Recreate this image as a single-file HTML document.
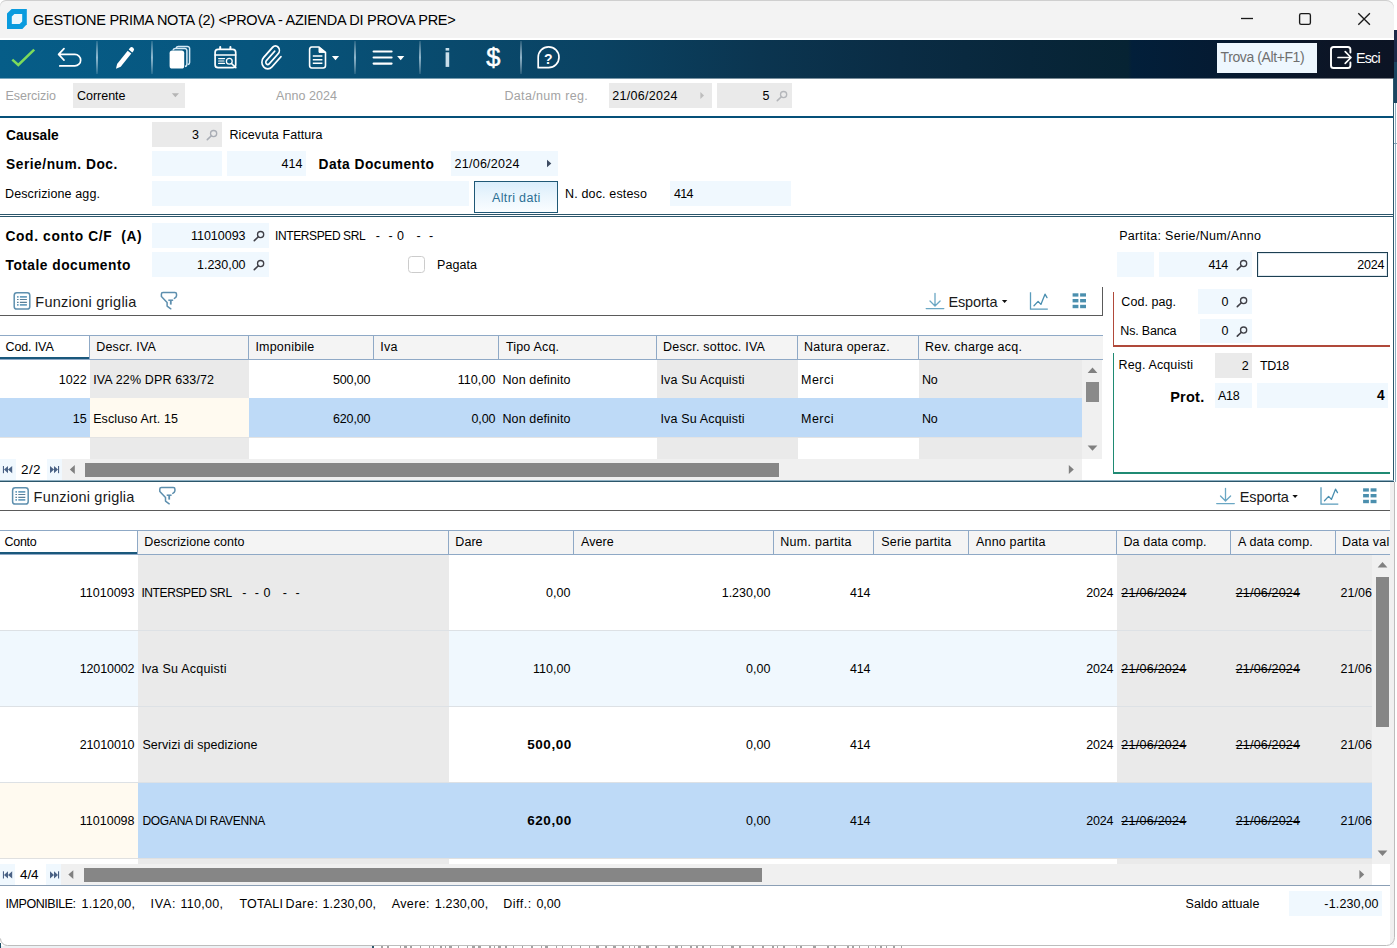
<!DOCTYPE html>
<html><head><meta charset="utf-8"><title>Gestione Prima Nota</title>
<style>
html,body{margin:0;padding:0;background:#fff;}
body{width:1397px;height:948px;overflow:hidden;font-family:"Liberation Sans",sans-serif;}
#w{position:relative;width:1397px;height:948px;overflow:hidden;background:#fff;font-family:"Liberation Sans",sans-serif;font-size:12.5px;line-height:20px;color:#000;}
#w i{position:absolute;display:block;font-style:normal;}
#w b{position:absolute;display:block;font-weight:400;white-space:pre;height:20px;line-height:20px;}
#w svg{position:absolute;display:block;overflow:visible;}

</style></head>
<body>
<div id="w">
<i style="left:1394px;top:0px;width:3px;height:30px;background:#fff;"></i>
<i style="left:1394px;top:30px;width:3px;height:32px;background:#1b2a49;"></i>
<i style="left:1394px;top:62px;width:3px;height:41px;background:#1b4561;"></i>
<i style="left:1395px;top:103px;width:1px;height:379px;background:#8fb0c2;"></i>
<i style="left:1394px;top:143px;width:3px;height:1px;background:#7f9fb4;"></i>
<i style="left:0px;top:0px;width:1394px;height:38px;background:#f3f3f3;border-radius:6px 8px 0 0;box-shadow:inset 0 1px 0 #cfcfcf;"></i>
<i style="left:0px;top:40px;width:1394px;height:38px;background:linear-gradient(90deg,#065d88 0px,#07557d 250px,#094a6d 450px,#0a4262 600px,#0b3550 760px,#0a2c44 900px,#08263a 1030px,#062333 1128px,#021f3a 1132px,#051a31 1230px,#0c1526 1330px,#0c1424 1394px);"></i>
<i style="left:0px;top:78px;width:1394px;height:1px;background:linear-gradient(90deg,#065d88 0px,#07557d 250px,#094a6d 450px,#0a4262 600px,#0b3550 760px,#0a2c44 900px,#08263a 1030px,#062333 1128px,#021f3a 1132px,#051a31 1230px,#0c1526 1330px,#0c1424 1394px);opacity:.55;"></i>
<i style="left:1217px;top:43px;width:100px;height:30px;background:#eef7fe;"></i>
<i style="left:73px;top:83px;width:112px;height:25px;background:#eaeaea;"></i>
<i style="left:609px;top:83px;width:103px;height:25px;background:#eaeaea;"></i>
<i style="left:717px;top:83px;width:75px;height:25px;background:#eaeaea;"></i>
<i style="left:0px;top:116px;width:1394px;height:2px;background:#055079;"></i>
<i style="left:1393px;top:78px;width:1px;height:404px;background:#2b566b;"></i>
<i style="left:152px;top:122px;width:70px;height:25px;background:#eaeaea;"></i>
<i style="left:152px;top:151px;width:70px;height:25px;background:#f0f8fe;"></i>
<i style="left:227px;top:151px;width:79px;height:25px;background:#f0f8fe;"></i>
<i style="left:451px;top:151px;width:107px;height:25px;background:#f0f8fe;"></i>
<i style="left:152px;top:181px;width:317px;height:25px;background:#f0f8fe;"></i>
<i style="left:670px;top:181px;width:121px;height:25px;background:#f0f8fe;"></i>
<i style="left:474px;top:181px;width:84px;height:32px;background:linear-gradient(#d9edfb,#eaf5fd 45%,#fafdff);box-sizing:border-box;border:1px solid #1f5876;"></i>
<i style="left:0px;top:214px;width:1394px;height:1px;background:#2b566b;"></i>
<i style="left:0px;top:216px;width:1394px;height:1px;background:#2b566b;"></i>
<i style="left:152px;top:223px;width:117px;height:25px;background:#f0f8fe;"></i>
<i style="left:152px;top:252px;width:117px;height:25px;background:#f0f8fe;"></i>
<i style="left:408px;top:256px;width:17px;height:17px;background:#fff;box-sizing:border-box;border:1.5px solid #cccccc;border-radius:3.5px;"></i>
<i style="left:1117px;top:252px;width:37px;height:25px;background:#f0f8fe;"></i>
<i style="left:1159px;top:252px;width:93px;height:25px;background:#f0f8fe;"></i>
<i style="left:1257px;top:252px;width:131px;height:25px;background:#fff;box-sizing:border-box;border:1px solid #1d3f52;box-shadow:inset 0 0 0 1px #dfe8ee;"></i>
<i style="left:1198px;top:289px;width:54px;height:25px;background:#f0f8fe;"></i>
<i style="left:1200px;top:319px;width:52px;height:24px;background:#f0f8fe;"></i>
<i style="left:1112.5px;top:292px;width:1.8px;height:55px;background:#b0493a;"></i>
<i style="left:1112.5px;top:345px;width:277.5px;height:1.8px;background:#b0493a;"></i>
<i style="left:1215px;top:353px;width:37px;height:25px;background:#eaeaea;"></i>
<i style="left:1215px;top:383px;width:37px;height:25px;background:#f0f8fe;"></i>
<i style="left:1257px;top:383px;width:131px;height:25px;background:#f0f8fe;"></i>
<i style="left:1112.5px;top:353px;width:1.8px;height:121px;background:#1f8a73;"></i>
<i style="left:1112.5px;top:472.2px;width:277.5px;height:1.8px;background:#1f8a73;"></i>
<i style="left:0px;top:315px;width:1103px;height:1px;background:#5a5a5a;"></i>
<i style="left:1102px;top:287px;width:1px;height:29px;background:#5a5a5a;"></i>
<i style="left:0px;top:335px;width:1103px;height:25px;background:#f4f4f4;box-sizing:border-box;border-top:1px solid #8fa9c6;border-bottom:1px solid #8fa9c6;"></i>
<i style="left:0px;top:336px;width:89px;height:22px;background:#fff;"></i>
<i style="left:0px;top:357px;width:89px;height:2px;background:#1a587c;"></i>
<i style="left:89px;top:335px;width:1px;height:25px;background:#8fa9c6;"></i>
<i style="left:248px;top:335px;width:1px;height:25px;background:#8fa9c6;"></i>
<i style="left:373px;top:335px;width:1px;height:25px;background:#8fa9c6;"></i>
<i style="left:498px;top:335px;width:1px;height:25px;background:#8fa9c6;"></i>
<i style="left:656px;top:335px;width:1px;height:25px;background:#8fa9c6;"></i>
<i style="left:797px;top:335px;width:1px;height:25px;background:#8fa9c6;"></i>
<i style="left:918px;top:335px;width:1px;height:25px;background:#8fa9c6;"></i>
<i style="left:0px;top:360px;width:1082px;height:38px;background:#fff;"></i>
<i style="left:90px;top:360px;width:159px;height:38px;background:#eaeaea;"></i>
<i style="left:657px;top:360px;width:141px;height:38px;background:#eaeaea;"></i>
<i style="left:919px;top:360px;width:163px;height:38px;background:#eaeaea;"></i>
<i style="left:0px;top:398px;width:1082px;height:39px;background:#bedaf7;"></i>
<i style="left:90px;top:398px;width:159px;height:39px;background:#fffaf0;"></i>
<i style="left:0px;top:437px;width:1082px;height:1px;background:#e3e3e3;"></i>
<i style="left:90px;top:438px;width:159px;height:21px;background:#eaeaea;"></i>
<i style="left:657px;top:438px;width:141px;height:21px;background:#eaeaea;"></i>
<i style="left:919px;top:438px;width:163px;height:21px;background:#eaeaea;"></i>
<i style="left:1082px;top:360px;width:20px;height:99px;background:#f0f0f0;"></i>
<i style="left:1086px;top:382px;width:13px;height:20px;background:#8a8a8a;"></i>
<i style="left:0px;top:459px;width:1082px;height:21px;background:#f0f0f0;"></i>
<i style="left:0px;top:459px;width:16px;height:21px;background:#f0f8fe;"></i>
<i style="left:16px;top:459px;width:31px;height:21px;background:#fff;"></i>
<i style="left:47px;top:459px;width:15px;height:21px;background:#f0f8fe;"></i>
<i style="left:85px;top:463px;width:694px;height:14px;background:#868686;"></i>
<i style="left:0px;top:480px;width:1394px;height:1px;background:#8fb0c2;"></i>
<i style="left:0px;top:481px;width:1394px;height:1px;background:#2b566b;"></i>
<i style="left:1390px;top:482px;width:4px;height:463px;background:#f0f0f0;"></i>
<i style="left:0px;top:510px;width:1390px;height:1px;background:#5a5a5a;"></i>
<i style="left:0px;top:530px;width:1390px;height:25px;background:#f4f4f4;box-sizing:border-box;border-top:1px solid #8fa9c6;border-bottom:1px solid #8fa9c6;"></i>
<i style="left:0px;top:531px;width:137px;height:22px;background:#fff;"></i>
<i style="left:0px;top:552px;width:137px;height:2px;background:#1a587c;"></i>
<i style="left:137px;top:530px;width:1px;height:25px;background:#8fa9c6;"></i>
<i style="left:448px;top:530px;width:1px;height:25px;background:#8fa9c6;"></i>
<i style="left:573px;top:530px;width:1px;height:25px;background:#8fa9c6;"></i>
<i style="left:773px;top:530px;width:1px;height:25px;background:#8fa9c6;"></i>
<i style="left:873px;top:530px;width:1px;height:25px;background:#8fa9c6;"></i>
<i style="left:968px;top:530px;width:1px;height:25px;background:#8fa9c6;"></i>
<i style="left:1116px;top:530px;width:1px;height:25px;background:#8fa9c6;"></i>
<i style="left:1230px;top:530px;width:1px;height:25px;background:#8fa9c6;"></i>
<i style="left:1335px;top:530px;width:1px;height:25px;background:#8fa9c6;"></i>
<i style="left:0px;top:631px;width:1372px;height:76px;background:#f0f8fe;"></i>
<i style="left:138px;top:555px;width:311px;height:228px;background:#eaeaea;"></i>
<i style="left:1117px;top:555px;width:255px;height:228px;background:#eaeaea;"></i>
<i style="left:0px;top:630px;width:1372px;height:1px;background:#dde1e5;"></i>
<i style="left:0px;top:706px;width:1372px;height:1px;background:#dde1e5;"></i>
<i style="left:0px;top:782px;width:1372px;height:1px;background:#dde1e5;"></i>
<i style="left:0px;top:783px;width:138px;height:76px;background:#fffaf0;"></i>
<i style="left:138px;top:783px;width:1234px;height:76px;background:#bedaf7;"></i>
<i style="left:0px;top:858px;width:1372px;height:1px;background:#e0e0e0;"></i>
<i style="left:138px;top:859px;width:311px;height:5px;background:#eaeaea;"></i>
<i style="left:1117px;top:859px;width:255px;height:5px;background:#eaeaea;"></i>
<i style="left:1372px;top:555px;width:18px;height:309px;background:#f0f0f0;"></i>
<i style="left:1376px;top:577px;width:13px;height:150px;background:#868686;"></i>
<i style="left:0px;top:864px;width:1372px;height:21px;background:#f0f0f0;"></i>
<i style="left:0px;top:864px;width:15px;height:21px;background:#f0f8fe;"></i>
<i style="left:15px;top:864px;width:31px;height:21px;background:#fff;"></i>
<i style="left:46px;top:864px;width:15px;height:21px;background:#f0f8fe;"></i>
<i style="left:84px;top:868px;width:678px;height:14px;background:#868686;"></i>
<i style="left:0px;top:885px;width:1390px;height:1px;background:#8b9fb5;"></i>
<i style="left:1289px;top:891px;width:93px;height:25px;background:#f0f8fe;"></i>
<i style="left:0px;top:946px;width:372px;height:2px;background:#edf1f4;"></i>
<i style="left:372px;top:945px;width:2px;height:3px;background:#2b566b;"></i>
<i style="left:0px;top:943px;width:1px;height:5px;background:#1d4f66;"></i>
<i style="left:381px;top:946px;width:2px;height:2px;background:#555;opacity:.55;"></i>
<i style="left:387px;top:946px;width:2px;height:2px;background:#555;opacity:.55;"></i>
<i style="left:400px;top:946px;width:1px;height:2px;background:#555;opacity:.55;"></i>
<i style="left:404px;top:946px;width:3px;height:2px;background:#555;opacity:.55;"></i>
<i style="left:410px;top:946px;width:2px;height:2px;background:#555;opacity:.55;"></i>
<i style="left:420px;top:946px;width:1px;height:2px;background:#555;opacity:.55;"></i>
<i style="left:429px;top:946px;width:1px;height:2px;background:#555;opacity:.55;"></i>
<i style="left:433px;top:946px;width:1px;height:2px;background:#555;opacity:.55;"></i>
<i style="left:440px;top:946px;width:2px;height:2px;background:#555;opacity:.55;"></i>
<i style="left:445px;top:946px;width:1px;height:2px;background:#555;opacity:.55;"></i>
<i style="left:449px;top:946px;width:3px;height:2px;background:#555;opacity:.55;"></i>
<i style="left:458px;top:946px;width:1px;height:2px;background:#555;opacity:.55;"></i>
<i style="left:467px;top:946px;width:1px;height:2px;background:#555;opacity:.55;"></i>
<i style="left:472px;top:946px;width:3px;height:2px;background:#555;opacity:.55;"></i>
<i style="left:478px;top:946px;width:3px;height:2px;background:#555;opacity:.55;"></i>
<i style="left:489px;top:946px;width:2px;height:2px;background:#555;opacity:.55;"></i>
<i style="left:494px;top:946px;width:1px;height:2px;background:#555;opacity:.55;"></i>
<i style="left:498px;top:946px;width:3px;height:2px;background:#555;opacity:.55;"></i>
<i style="left:505px;top:946px;width:2px;height:2px;background:#555;opacity:.55;"></i>
<i style="left:513px;top:946px;width:1px;height:2px;background:#555;opacity:.55;"></i>
<i style="left:522px;top:946px;width:1px;height:2px;background:#555;opacity:.55;"></i>
<i style="left:531px;top:946px;width:2px;height:2px;background:#555;opacity:.55;"></i>
<i style="left:541px;top:946px;width:1px;height:2px;background:#555;opacity:.55;"></i>
<i style="left:545px;top:946px;width:3px;height:2px;background:#555;opacity:.55;"></i>
<i style="left:556px;top:946px;width:1px;height:2px;background:#555;opacity:.55;"></i>
<i style="left:562px;top:946px;width:1px;height:2px;background:#555;opacity:.55;"></i>
<i style="left:571px;top:946px;width:1px;height:2px;background:#555;opacity:.55;"></i>
<i style="left:580px;top:946px;width:1px;height:2px;background:#555;opacity:.55;"></i>
<i style="left:589px;top:946px;width:1px;height:2px;background:#555;opacity:.55;"></i>
<i style="left:596px;top:946px;width:3px;height:2px;background:#555;opacity:.55;"></i>
<i style="left:605px;top:946px;width:2px;height:2px;background:#555;opacity:.55;"></i>
<i style="left:613px;top:946px;width:3px;height:2px;background:#555;opacity:.55;"></i>
<i style="left:622px;top:946px;width:2px;height:2px;background:#555;opacity:.55;"></i>
<i style="left:629px;top:946px;width:1px;height:2px;background:#555;opacity:.55;"></i>
<i style="left:634px;top:946px;width:1px;height:2px;background:#555;opacity:.55;"></i>
<i style="left:638px;top:946px;width:3px;height:2px;background:#555;opacity:.55;"></i>
<i style="left:646px;top:946px;width:3px;height:2px;background:#555;opacity:.55;"></i>
<i style="left:655px;top:946px;width:2px;height:2px;background:#555;opacity:.55;"></i>
<i style="left:668px;top:946px;width:2px;height:2px;background:#555;opacity:.55;"></i>
<i style="left:675px;top:946px;width:3px;height:2px;background:#555;opacity:.55;"></i>
<i style="left:681px;top:946px;width:1px;height:2px;background:#555;opacity:.55;"></i>
<i style="left:690px;top:946px;width:2px;height:2px;background:#555;opacity:.55;"></i>
<i style="left:696px;top:946px;width:2px;height:2px;background:#555;opacity:.55;"></i>
<i style="left:702px;top:946px;width:2px;height:2px;background:#555;opacity:.55;"></i>
<i style="left:710px;top:946px;width:1px;height:2px;background:#555;opacity:.55;"></i>
<i style="left:722px;top:946px;width:1px;height:2px;background:#555;opacity:.55;"></i>
<i style="left:731px;top:946px;width:3px;height:2px;background:#555;opacity:.55;"></i>
<i style="left:739px;top:946px;width:2px;height:2px;background:#555;opacity:.55;"></i>
<i style="left:752px;top:946px;width:2px;height:2px;background:#555;opacity:.55;"></i>
<i style="left:762px;top:946px;width:2px;height:2px;background:#555;opacity:.55;"></i>
<i style="left:772px;top:946px;width:2px;height:2px;background:#555;opacity:.55;"></i>
<i style="left:777px;top:946px;width:1px;height:2px;background:#555;opacity:.55;"></i>
<i style="left:783px;top:946px;width:2px;height:2px;background:#555;opacity:.55;"></i>
<i style="left:796px;top:946px;width:1px;height:2px;background:#555;opacity:.55;"></i>
<i style="left:800px;top:946px;width:2px;height:2px;background:#555;opacity:.55;"></i>
<i style="left:813px;top:946px;width:3px;height:2px;background:#555;opacity:.55;"></i>
<i style="left:827px;top:946px;width:2px;height:2px;background:#555;opacity:.55;"></i>
<i style="left:834px;top:946px;width:2px;height:2px;background:#555;opacity:.55;"></i>
<i style="left:847px;top:946px;width:2px;height:2px;background:#555;opacity:.55;"></i>
<i style="left:852px;top:946px;width:2px;height:2px;background:#555;opacity:.55;"></i>
<i style="left:859px;top:946px;width:1px;height:2px;background:#555;opacity:.55;"></i>
<i style="left:868px;top:946px;width:1px;height:2px;background:#555;opacity:.55;"></i>
<i style="left:875px;top:946px;width:1px;height:2px;background:#555;opacity:.55;"></i>
<i style="left:880px;top:946px;width:2px;height:2px;background:#555;opacity:.55;"></i>
<i style="left:886px;top:946px;width:1px;height:2px;background:#555;opacity:.55;"></i>
<i style="left:893px;top:946px;width:2px;height:2px;background:#555;opacity:.55;"></i>
<i style="left:901px;top:946px;width:1px;height:2px;background:#555;opacity:.55;"></i>
<svg style="left:0;top:0" width="1397" height="948" viewBox="0 0 1397 948"><path d="M0.5 938.5 A7 7 0 0 0 7.5 945.5 H1386.5 A8 8 0 0 0 1394.5 937.5 V482" stroke="#bdbdbd" stroke-width="1" fill="none"/></svg>
<b style="left:33.00px;top:10px;font-size:14.5px;letter-spacing:-0.280px;">GESTIONE PRIMA NOTA (2) &lt;PROVA - AZIENDA DI PROVA PRE&gt;</b>
<b style="left:1220.60px;top:47px;font-size:14px;color:#6f6f6f;letter-spacing:-0.405px;">Trova (Alt+F1)</b>
<b style="left:1356.00px;top:48px;font-size:14.25px;color:#fff;letter-spacing:-0.785px;">Esci</b>
<b style="left:5.50px;top:86px;color:#a3a3a3;letter-spacing:-0.032px;">Esercizio</b>
<b style="left:77.00px;top:86px;letter-spacing:-0.026px;">Corrente</b>
<b style="left:276.00px;top:86px;color:#a3a3a3;letter-spacing:0.060px;">Anno 2024</b>
<b style="left:504.40px;top:86px;color:#a3a3a3;letter-spacing:0.347px;">Data/num reg.</b>
<b style="left:612.20px;top:86px;letter-spacing:0.299px;">21/06/2024</b>
<b style="left:762.50px;top:86px;">5</b>
<b style="left:6.00px;top:126px;font-size:13.75px;font-weight:700;letter-spacing:-0.015px;">Causale</b>
<b style="left:192.00px;top:125px;">3</b>
<b style="left:229.50px;top:125px;letter-spacing:0.090px;">Ricevuta Fattura</b>
<b style="left:6.00px;top:155px;font-size:13.75px;font-weight:700;letter-spacing:0.529px;">Serie/num. Doc.</b>
<b style="left:281.60px;top:154px;">414</b>
<b style="left:318.50px;top:155px;font-size:13.75px;font-weight:700;letter-spacing:0.473px;">Data Documento</b>
<b style="left:454.50px;top:154px;letter-spacing:0.266px;">21/06/2024</b>
<b style="left:5.00px;top:184px;letter-spacing:0.125px;">Descrizione agg.</b>
<b style="left:492.00px;top:188px;color:#2a6f94;letter-spacing:0.347px;">Altri dati</b>
<b style="left:565.00px;top:184px;letter-spacing:0.158px;">N. doc. esteso</b>
<b style="left:674.00px;top:184px;letter-spacing:-0.702px;">414</b>
<b style="left:5.50px;top:227px;font-size:13.75px;font-weight:700;letter-spacing:0.644px;">Cod. conto C/F  (A)</b>
<b style="left:191.00px;top:226px;letter-spacing:-0.019px;">11010093</b>
<b style="left:275.00px;top:226px;font-size:12px;letter-spacing:-0.390px;">INTERSPED SRL</b>
<b style="left:375.80px;top:226px;letter-spacing:0.498px;">-  - 0   -  -</b>
<b style="left:5.50px;top:256px;font-size:13.75px;font-weight:700;letter-spacing:0.501px;">Totale documento</b>
<b style="left:197.00px;top:255px;letter-spacing:-0.015px;">1.230,00</b>
<b style="left:437.00px;top:255px;letter-spacing:0.067px;">Pagata</b>
<b style="left:1119.20px;top:226px;letter-spacing:0.317px;">Partita: Serie/Num/Anno</b>
<b style="left:1208.40px;top:255px;letter-spacing:-0.552px;">414</b>
<b style="left:1357.20px;top:255px;letter-spacing:-0.219px;">2024</b>
<b style="left:1121.30px;top:292px;letter-spacing:0.058px;">Cod. pag.</b>
<b style="left:1221.40px;top:292px;">0</b>
<b style="left:1120.30px;top:321px;letter-spacing:-0.189px;">Ns. Banca</b>
<b style="left:1221.40px;top:321px;">0</b>
<b style="left:1118.60px;top:355px;letter-spacing:0.128px;">Reg. Acquisti</b>
<b style="left:1241.80px;top:356px;">2</b>
<b style="left:1260.00px;top:356px;letter-spacing:-0.472px;">TD18</b>
<b style="left:1170.20px;top:387px;font-size:14.5px;font-weight:700;letter-spacing:0.250px;">Prot.</b>
<b style="left:1218.00px;top:386px;letter-spacing:-0.295px;">A18</b>
<b style="left:1377.00px;top:386px;font-size:13.75px;font-weight:700;">4</b>
<b style="left:35.30px;top:292px;font-size:14.5px;color:#1a1a1a;letter-spacing:0.236px;">Funzioni griglia</b>
<b style="left:948.50px;top:292px;font-size:14.5px;color:#1a1a1a;letter-spacing:-0.151px;">Esporta</b>
<b style="left:33.60px;top:487px;font-size:14.5px;color:#1a1a1a;letter-spacing:0.216px;">Funzioni griglia</b>
<b style="left:1239.80px;top:487px;font-size:14.5px;color:#1a1a1a;letter-spacing:-0.151px;">Esporta</b>
<b style="left:5.50px;top:337px;letter-spacing:-0.123px;">Cod. IVA</b>
<b style="left:96.20px;top:337px;letter-spacing:0.180px;">Descr. IVA</b>
<b style="left:255.40px;top:337px;letter-spacing:0.208px;">Imponibile</b>
<b style="left:380.30px;top:337px;letter-spacing:0.289px;">Iva</b>
<b style="left:505.90px;top:337px;letter-spacing:0.192px;">Tipo Acq.</b>
<b style="left:663.00px;top:337px;letter-spacing:0.201px;">Descr. sottoc. IVA</b>
<b style="left:804.00px;top:337px;letter-spacing:0.238px;">Natura operaz.</b>
<b style="left:925.00px;top:337px;letter-spacing:0.220px;">Rev. charge acq.</b>
<b style="left:58.84px;top:370px;">1022</b>
<b style="left:93.20px;top:370px;letter-spacing:0.134px;">IVA 22% DPR 633/72</b>
<b style="left:333.00px;top:370px;letter-spacing:-0.156px;">500,00</b>
<b style="left:457.80px;top:370px;letter-spacing:0.049px;">110,00</b>
<b style="left:502.40px;top:370px;letter-spacing:0.131px;">Non definito</b>
<b style="left:660.50px;top:370px;letter-spacing:0.150px;">Iva Su Acquisti</b>
<b style="left:801.00px;top:370px;letter-spacing:0.481px;">Merci</b>
<b style="left:922.00px;top:370px;letter-spacing:-0.327px;">No</b>
<b style="left:72.75px;top:409px;">15</b>
<b style="left:93.20px;top:409px;letter-spacing:0.099px;">Escluso Art. 15</b>
<b style="left:333.00px;top:409px;letter-spacing:-0.156px;">620,00</b>
<b style="left:471.60px;top:409px;letter-spacing:-0.192px;">0,00</b>
<b style="left:502.40px;top:409px;letter-spacing:0.131px;">Non definito</b>
<b style="left:660.50px;top:409px;letter-spacing:0.150px;">Iva Su Acquisti</b>
<b style="left:801.00px;top:409px;letter-spacing:0.481px;">Merci</b>
<b style="left:922.00px;top:409px;letter-spacing:-0.327px;">No</b>
<b style="left:21.00px;top:460px;font-size:13.5px;letter-spacing:0.371px;">2/2</b>
<b style="left:4.50px;top:532px;letter-spacing:-0.276px;">Conto</b>
<b style="left:144.30px;top:532px;letter-spacing:0.056px;">Descrizione conto</b>
<b style="left:455.30px;top:532px;letter-spacing:0.053px;">Dare</b>
<b style="left:581.00px;top:532px;letter-spacing:0.056px;">Avere</b>
<b style="left:780.20px;top:532px;letter-spacing:0.298px;">Num. partita</b>
<b style="left:881.30px;top:532px;letter-spacing:0.205px;">Serie partita</b>
<b style="left:976.00px;top:532px;letter-spacing:0.186px;">Anno partita</b>
<b style="left:1123.40px;top:532px;letter-spacing:0.148px;">Da data comp.</b>
<b style="left:1238.00px;top:532px;letter-spacing:0.166px;">A data comp.</b>
<b style="left:1342.00px;top:532px;letter-spacing:0.189px;">Data val</b>
<b style="left:79.70px;top:583px;letter-spacing:0.023px;">11010093</b>
<b style="left:141.40px;top:583px;font-size:12px;letter-spacing:-0.390px;">INTERSPED SRL</b>
<b style="left:242.20px;top:583px;letter-spacing:0.506px;">-  - 0   -  -</b>
<b style="left:546.02px;top:583px;">0,00</b>
<b style="left:721.69px;top:583px;">1.230,00</b>
<b style="left:850.00px;top:583px;letter-spacing:-0.252px;">414</b>
<b style="left:1086.30px;top:583px;letter-spacing:-0.219px;">2024</b>
<b style="left:1121.30px;top:583px;letter-spacing:0.266px;text-decoration:line-through;">21/06/2024</b>
<b style="left:1235.70px;top:583px;letter-spacing:0.188px;text-decoration:line-through;">21/06/2024</b>
<b style="left:1340.60px;top:583px;letter-spacing:0.018px;">21/06</b>
<b style="left:79.70px;top:659px;letter-spacing:-0.109px;">12010002</b>
<b style="left:141.40px;top:659px;letter-spacing:0.228px;">Iva Su Acquisti</b>
<b style="left:533.05px;top:659px;">110,00</b>
<b style="left:746.02px;top:659px;">0,00</b>
<b style="left:850.00px;top:659px;letter-spacing:-0.252px;">414</b>
<b style="left:1086.30px;top:659px;letter-spacing:-0.219px;">2024</b>
<b style="left:1121.30px;top:659px;letter-spacing:0.266px;text-decoration:line-through;">21/06/2024</b>
<b style="left:1235.70px;top:659px;letter-spacing:0.188px;text-decoration:line-through;">21/06/2024</b>
<b style="left:1340.60px;top:659px;letter-spacing:0.018px;">21/06</b>
<b style="left:79.70px;top:735px;letter-spacing:-0.109px;">21010010</b>
<b style="left:142.40px;top:735px;letter-spacing:0.055px;">Servizi di spedizione</b>
<b style="left:527.20px;top:735px;font-size:13.5px;font-weight:700;letter-spacing:0.563px;">500,00</b>
<b style="left:746.02px;top:735px;">0,00</b>
<b style="left:850.00px;top:735px;letter-spacing:-0.252px;">414</b>
<b style="left:1086.30px;top:735px;letter-spacing:-0.219px;">2024</b>
<b style="left:1121.30px;top:735px;letter-spacing:0.266px;text-decoration:line-through;">21/06/2024</b>
<b style="left:1235.70px;top:735px;letter-spacing:0.188px;text-decoration:line-through;">21/06/2024</b>
<b style="left:1340.60px;top:735px;letter-spacing:0.018px;">21/06</b>
<b style="left:79.70px;top:811px;letter-spacing:0.023px;">11010098</b>
<b style="left:142.40px;top:811px;font-size:12px;letter-spacing:-0.262px;">DOGANA DI RAVENNA</b>
<b style="left:527.20px;top:811px;font-size:13.5px;font-weight:700;letter-spacing:0.563px;">620,00</b>
<b style="left:746.02px;top:811px;">0,00</b>
<b style="left:850.00px;top:811px;letter-spacing:-0.252px;">414</b>
<b style="left:1086.30px;top:811px;letter-spacing:-0.219px;">2024</b>
<b style="left:1121.30px;top:811px;letter-spacing:0.266px;text-decoration:line-through;">21/06/2024</b>
<b style="left:1235.70px;top:811px;letter-spacing:0.188px;text-decoration:line-through;">21/06/2024</b>
<b style="left:1340.60px;top:811px;letter-spacing:0.018px;">21/06</b>
<b style="left:20.00px;top:865px;font-size:13.5px;letter-spacing:-0.129px;">4/4</b>
<b style="left:5.50px;top:894px;letter-spacing:-0.445px;">IMPONIBILE:</b>
<b style="left:81.60px;top:894px;letter-spacing:0.143px;">1.120,00,</b>
<b style="left:150.50px;top:894px;letter-spacing:0.760px;">IVA:</b>
<b style="left:180.40px;top:894px;letter-spacing:0.299px;">110,00,</b>
<b style="left:239.50px;top:894px;letter-spacing:0.154px;">TOTALI</b>
<b style="left:285.40px;top:894px;letter-spacing:0.477px;">Dare:</b>
<b style="left:322.50px;top:894px;letter-spacing:0.168px;">1.230,00,</b>
<b style="left:391.80px;top:894px;letter-spacing:0.354px;">Avere:</b>
<b style="left:434.80px;top:894px;letter-spacing:0.155px;">1.230,00,</b>
<b style="left:503.30px;top:894px;letter-spacing:0.481px;">Diff.:</b>
<b style="left:536.40px;top:894px;letter-spacing:-0.026px;">0,00</b>
<b style="left:1185.50px;top:894px;letter-spacing:0.073px;">Saldo attuale</b>
<b style="left:1324.30px;top:894px;letter-spacing:0.167px;">-1.230,00</b>
<svg style="left:0;top:0" width="1397" height="948" viewBox="0 0 1397 948"><defs><linearGradient id="sep" x1="0" y1="0" x2="0" y2="1"><stop offset="0" stop-color="#fff" stop-opacity=".12"/><stop offset=".5" stop-color="#cfe8f6" stop-opacity=".75"/><stop offset="1" stop-color="#fff" stop-opacity=".12"/></linearGradient></defs><path d="M7 13.6 L11.6 9 H26.8 V24.2 L22.4 28.9 H7 Z" fill="#0a9bde"/><path d="M11.8 16.6 L14.4 13.9 H22.2 V21.4 L19.6 24 H11.8 Z" fill="#eef7fc"/><path d="M1241 18.5 H1253" stroke="#1a1a1a" stroke-width="1.3" fill="none"/><rect x="1299.6" y="13.6" width="10.8" height="10.8" rx="1.6" stroke="#1a1a1a" stroke-width="1.35" fill="none"/><path d="M1358.3 13.3 L1369.9 24.7 M1369.9 13.3 L1358.3 24.7" stroke="#1a1a1a" stroke-width="1.35" fill="none"/><rect x="96.1" y="41" width="1.8" height="33" fill="url(#sep)"/><rect x="151.1" y="41" width="1.8" height="33" fill="url(#sep)"/><rect x="354.1" y="41" width="1.8" height="33" fill="url(#sep)"/><rect x="419.1" y="41" width="1.8" height="33" fill="url(#sep)"/><rect x="520.1" y="41" width="1.8" height="33" fill="url(#sep)"/><path d="M12.3 59.6 L18.3 65 L34.2 49.6" stroke="#7ddb5b" stroke-width="2.5" fill="none"/><path d="M64 48.7 L58.6 54.4 L64 60.1 M58.8 54.4 H74.9 A5.75 5.75 0 0 1 74.9 65.9 H59.8" stroke="#fff" stroke-width="1.7" fill="none" stroke-linecap="round" stroke-linejoin="round"/><g fill="#fff"><path d="M116 68.8 L117.1 63.9 L127.7 50.7 L131.3 53.6 L120.7 66.8 Z"/><path d="M128.7 49.5 L129.9 48 A2.3 2.3 0 0 1 133.5 50.9 L132.3 52.4 Z"/></g><g><rect x="169.6" y="50.6" width="14.6" height="18" rx="2.6" fill="#fff"/><path d="M173.2 50.2 V50 A2.2 2.2 0 0 1 175.4 48.4 H184.6 A2.2 2.2 0 0 1 186.9 50.6 V64.4 A2.2 2.2 0 0 1 185 66.5" stroke="#d5e9f5" stroke-width="1.5" fill="none"/><path d="M176.2 48 A2.2 2.2 0 0 1 178.4 46.4 H187.4 A2.2 2.2 0 0 1 189.6 48.6 V62.4 A2.2 2.2 0 0 1 187.8 64.5" stroke="#d5e9f5" stroke-width="1.5" fill="none"/></g><g stroke="#fff" fill="none" stroke-linecap="round"><rect x="215.1" y="49.3" width="20.6" height="18.4" rx="3" stroke-width="1.7"/><path d="M215 55 H235.8" stroke-width="1.3"/><path d="M220.2 46.9 V48.8 M230.4 46.9 V48.8" stroke-width="2"/><path d="M218.6 58.6 H224.6 M218.6 61 H224 M218.6 63.4 H224.6" stroke-width="1.1"/><circle cx="229.3" cy="61.2" r="2.9" stroke-width="1.3"/><path d="M231.5 63.5 L235.8 67.6" stroke-width="1.6"/></g><g transform="translate(259.9,44.4) scale(0.985,1.115)"><path d="M21.44 11.05l-9.19 9.19a6 6 0 0 1-8.49-8.49l9.19-9.19a4 4 0 0 1 5.66 5.66l-9.2 9.19a2 2 0 0 1-2.83-2.83l8.49-8.48" stroke="#fff" stroke-width="1.65" fill="none" stroke-linecap="round" stroke-linejoin="round"/></g><g stroke="#fff" fill="none" stroke-linejoin="round"><path d="M311.8 47 H319 L325.5 52.4 V65.6 A2.4 2.4 0 0 1 323.1 68 H311.8 A2.4 2.4 0 0 1 309.6 65.6 V49.4 A2.4 2.4 0 0 1 311.8 47 Z" stroke-width="1.6"/><path d="M319 47 L325.5 52.4 H319 Z" fill="#fff" stroke-width="1"/><path d="M312.8 56 H322.4 M312.8 59.7 H322.4 M312.8 63.3 H322.4" stroke-width="1.6"/></g><path d="M331.9 56 H339.1 L335.5 60.2 Z" fill="#fff"/><path d="M373.6 51.5 H391.6 M373.6 57.5 H391.6 M373.6 63.6 H391.6" stroke="#fff" stroke-width="2.1" stroke-linecap="round" fill="none"/><path d="M397.1 56 H404.3 L400.7 60.2 Z" fill="#fff"/><g fill="#c9deea"><rect x="445.6" y="48" width="3.6" height="2.6"/><rect x="445.6" y="52.3" width="3.6" height="14.6"/></g><text x="493.4" y="66.2" font-family="Liberation Sans, sans-serif" font-size="25.5" font-weight="400" fill="#fff" text-anchor="middle" stroke="#fff" stroke-width=".5">$</text><path d="M538.2 67.7 V57.3 A10.4 10.4 0 1 1 548.6 67.7 Z" stroke="#fff" stroke-width="1.7" fill="none" stroke-linejoin="round"/><text x="548.3" y="63.6" font-family="Liberation Sans, sans-serif" font-size="14" font-weight="700" fill="#fff" text-anchor="middle">?</text><g stroke="#fff" fill="none" stroke-linecap="round" stroke-linejoin="round"><path d="M1350.4 52.5 V49.6 A2.6 2.6 0 0 0 1347.8 47 H1333.6 A2.6 2.6 0 0 0 1331 49.6 V65.4 A2.6 2.6 0 0 0 1333.6 68 H1347.8 A2.6 2.6 0 0 0 1350.4 65.4 V62.5" stroke-width="1.9"/><path d="M1338 57.5 H1350.6 M1345.2 51.6 L1351 57.5 L1345.2 63.4" stroke-width="1.7"/></g><g stroke="#a9adb5" stroke-width="1.3" fill="none" stroke-linecap="round"><circle cx="213.6" cy="133.6" r="3.1"/><path d="M211.1 136.0 L207.3 139.6" stroke-width="1.6"/></g><g stroke="#b4b6ba" stroke-width="1.3" fill="none" stroke-linecap="round"><circle cx="783.6" cy="94.6" r="3.1"/><path d="M781.1 97.0 L777.3 100.6" stroke-width="1.6"/></g><g stroke="#3f3f46" stroke-width="1.3" fill="none" stroke-linecap="round"><circle cx="260.6" cy="234.6" r="3.1"/><path d="M258.1 237.0 L254.3 240.6" stroke-width="1.6"/></g><g stroke="#3f3f46" stroke-width="1.3" fill="none" stroke-linecap="round"><circle cx="260.6" cy="263.6" r="3.1"/><path d="M258.1 266.0 L254.3 269.6" stroke-width="1.6"/></g><g stroke="#3f3f46" stroke-width="1.3" fill="none" stroke-linecap="round"><circle cx="1243.6" cy="263.6" r="3.1"/><path d="M1241.1 266.0 L1237.3 269.6" stroke-width="1.6"/></g><g stroke="#3f3f46" stroke-width="1.3" fill="none" stroke-linecap="round"><circle cx="1243.6" cy="300.6" r="3.1"/><path d="M1241.1 303.0 L1237.3 306.6" stroke-width="1.6"/></g><g stroke="#3f3f46" stroke-width="1.3" fill="none" stroke-linecap="round"><circle cx="1243.6" cy="330.1" r="3.1"/><path d="M1241.1 332.5 L1237.3 336.1" stroke-width="1.6"/></g><path d="M171.8 93.2 H179 L175.4 97.3 Z" fill="#b5b5b5"/><path d="M700.4 92 V99 L704 95.5 Z" fill="#bdbdbd"/><path d="M547 159.8 V167.2 L551.3 163.5 Z" fill="#3d4c62"/><g transform="translate(0,0)"><rect x="14.2" y="292.8" width="15.6" height="16.2" rx="2.6" fill="#fcfeff" stroke="#5d8fae" stroke-width="1.5"/><path d="M17 296.9 H18.6 M19.9 296.9 H26.9 M17 304.9 H18.6 M19.9 304.9 H26.9" stroke="#6a9fbe" stroke-width="1.6" fill="none"/><path d="M17 299.5 H18.6 M19.9 299.5 H26.9 M17 302.4 H18.6 M19.9 302.4 H26.9" stroke="#5a7f98" stroke-width="1.1" fill="none"/><path d="M161.4 296.4 V294.1 A1.6 1.6 0 0 1 163 292.5 H174.9 A1.6 1.6 0 0 1 176.5 294.1 V295.8 Q176.3 297.4 174.4 298.4 M161.4 296.4 L167.1 302.4 V306.1 L170.8 308.8" stroke="#5d8fae" stroke-width="1.5" fill="none" stroke-linecap="round" stroke-linejoin="round"/><path d="M168.3 300.2 H173.2" stroke="#5d8fae" stroke-width="1.5" fill="none"/><path d="M170.8 300.2 V304.6" stroke="#5d8fae" stroke-width="1.8" fill="none"/></g><g transform="translate(-1.6,195)"><rect x="14.2" y="292.8" width="15.6" height="16.2" rx="2.6" fill="#fcfeff" stroke="#5d8fae" stroke-width="1.5"/><path d="M17 296.9 H18.6 M19.9 296.9 H26.9 M17 304.9 H18.6 M19.9 304.9 H26.9" stroke="#6a9fbe" stroke-width="1.6" fill="none"/><path d="M17 299.5 H18.6 M19.9 299.5 H26.9 M17 302.4 H18.6 M19.9 302.4 H26.9" stroke="#5a7f98" stroke-width="1.1" fill="none"/><path d="M161.4 296.4 V294.1 A1.6 1.6 0 0 1 163 292.5 H174.9 A1.6 1.6 0 0 1 176.5 294.1 V295.8 Q176.3 297.4 174.4 298.4 M161.4 296.4 L167.1 302.4 V306.1 L170.8 308.8" stroke="#5d8fae" stroke-width="1.5" fill="none" stroke-linecap="round" stroke-linejoin="round"/><path d="M168.3 300.2 H173.2" stroke="#5d8fae" stroke-width="1.5" fill="none"/><path d="M170.8 300.2 V304.6" stroke="#5d8fae" stroke-width="1.8" fill="none"/></g><g transform="translate(0,0)"><path d="M935 293.3 V305.8 M930 301 L935 306 L940.1 301 M926.2 308.6 H943.8" stroke="#6aa7c4" stroke-width="1.3" fill="none" stroke-linecap="round" stroke-linejoin="round"/><path d="M1001.9 300 H1007.3 L1004.6 302.9 Z" fill="#111"/><path d="M1030.5 292.2 V309.2 H1047.8" stroke="#5a9cbc" stroke-width="1.3" fill="none"/><path d="M1034 305.8 L1038.1 301.4 L1040.9 304.4 L1045 294.2 L1047 297.6" stroke="#4a8fb0" stroke-width="1.3" fill="none" stroke-linejoin="round" stroke-linecap="round"/><g fill="#4b8fae"><rect x="1072.6" y="293.3" width="5.8" height="3.3"/><rect x="1080.1" y="293.3" width="5.9" height="3.3"/><rect x="1072.6" y="299" width="5.8" height="3.4"/><rect x="1080.1" y="299" width="5.9" height="3.4"/><rect x="1072.6" y="304.8" width="5.8" height="3.4"/><rect x="1080.1" y="304.8" width="5.9" height="3.4"/></g></g><g transform="translate(290.5,195)"><path d="M935 293.3 V305.8 M930 301 L935 306 L940.1 301 M926.2 308.6 H943.8" stroke="#6aa7c4" stroke-width="1.3" fill="none" stroke-linecap="round" stroke-linejoin="round"/><path d="M1001.9 300 H1007.3 L1004.6 302.9 Z" fill="#111"/><path d="M1030.5 292.2 V309.2 H1047.8" stroke="#5a9cbc" stroke-width="1.3" fill="none"/><path d="M1034 305.8 L1038.1 301.4 L1040.9 304.4 L1045 294.2 L1047 297.6" stroke="#4a8fb0" stroke-width="1.3" fill="none" stroke-linejoin="round" stroke-linecap="round"/><g fill="#4b8fae"><rect x="1072.6" y="293.3" width="5.8" height="3.3"/><rect x="1080.1" y="293.3" width="5.9" height="3.3"/><rect x="1072.6" y="299" width="5.8" height="3.4"/><rect x="1080.1" y="299" width="5.9" height="3.4"/><rect x="1072.6" y="304.8" width="5.8" height="3.4"/><rect x="1080.1" y="304.8" width="5.9" height="3.4"/></g></g><g transform="translate(0,0)" fill="#4a6285"><rect x="2.9" y="466" width="1.1" height="7.2"/><path d="M4 469.6 L8 466 V473.2 Z M8 469.6 L12.2 466 V473.2 Z"/><rect x="58" y="466" width="1.1" height="7.2"/><path d="M58 469.6 L54 466 V473.2 Z M54 469.6 L50 466 V473.2 Z"/></g><g transform="translate(0,405.29999999999995)" fill="#4a6285"><rect x="2.9" y="466" width="1.1" height="7.2"/><path d="M4 469.6 L8 466 V473.2 Z M8 469.6 L12.2 466 V473.2 Z"/><rect x="58" y="466" width="1.1" height="7.2"/><path d="M58 469.6 L54 466 V473.2 Z M54 469.6 L50 466 V473.2 Z"/></g><path d="M69.8 469.5 L74.8 465 L74.8 474 Z" fill="#808080"/><path d="M1073.8 469.5 L1068.8 465 L1068.8 474 Z" fill="#808080"/><path d="M1092.5 367.6 L1087.6 373 L1097.4 373 Z" fill="#808080"/><path d="M1092.5 450.8 L1087.6 445.4 L1097.4 445.4 Z" fill="#808080"/><path d="M68.3 874.6 L73.3 870.2 L73.3 879 Z" fill="#808080"/><path d="M1364.2 874.5 L1359.4 870 L1359.4 879 Z" fill="#808080"/><path d="M1382.5 562 L1377.6 567.4 L1387.4 567.4 Z" fill="#808080"/><path d="M1382.5 856 L1377.6 850.6 L1387.4 850.6 Z" fill="#808080"/></svg>
</div>
</body></html>
